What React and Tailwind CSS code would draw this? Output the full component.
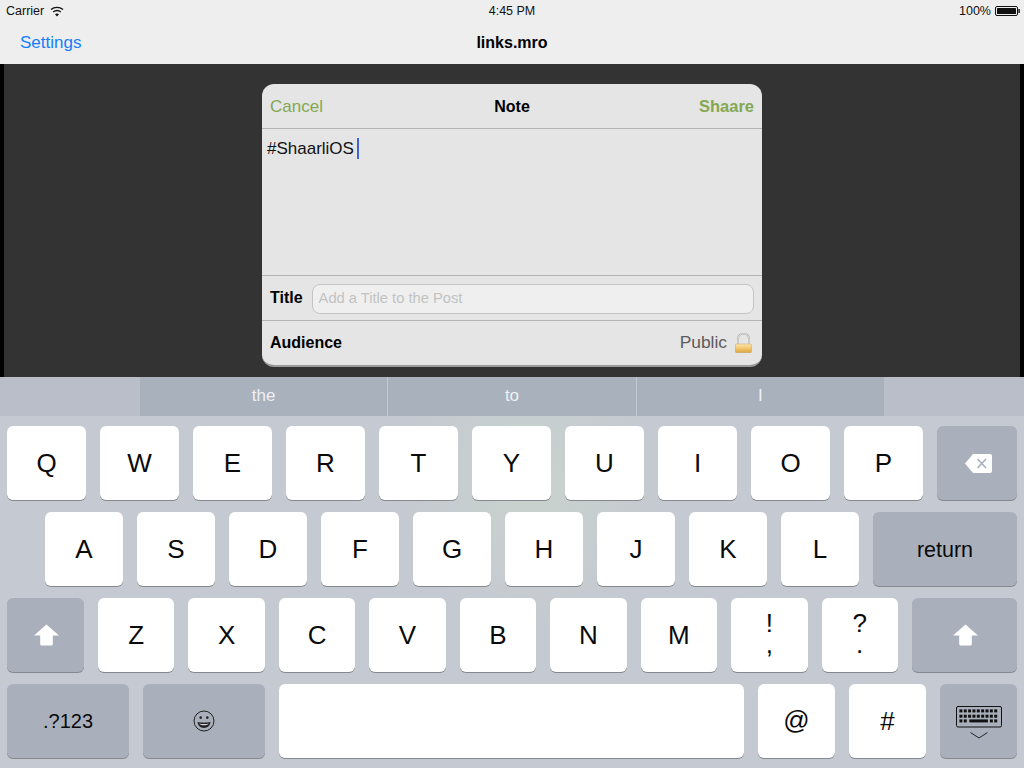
const font = { fontFamily: '"Liberation Sans", Arial, sans-serif' };

function Key({ children, dark, className = "" }) {
  return (
    <div
      className={`h-[74px] rounded-[6px] flex items-center justify-center text-[#0a0a0a] shadow-[0_1px_0_#85888d] ${dark ? "bg-[#a9b0bb]" : "bg-white"} ${className}`}
    >
      {children}
    </div>
  );
}

function Letter({ c }) {
  return (
    <Key className="flex-1 min-w-0 text-[26px] leading-none pb-[1px]">
      <span>{c}</span>
    </Key>
  );
}

function Shift() {
  return (
    <svg width="25" height="22" viewBox="0 0 25 22">
      <path d="M12.5 0.5 L25 11.5 L18.8 11.5 L18.8 20 Q18.8 21.5 17.3 21.5 L7.7 21.5 Q6.2 21.5 6.2 20 L6.2 11.5 L0 11.5 Z" fill="#fff" />
    </svg>
  );
}

function Backspace() {
  return (
    <svg width="27" height="19" viewBox="0 0 27 19">
      <path d="M8 0 H25 Q27 0 27 2 V17 Q27 19 25 19 H8 L0 9.5 Z" fill="#fff" />
      <path d="M12.5 5 L21 14 M21 5 L12.5 14" stroke="#a9b0bb" strokeWidth="1.6" fill="none" />
    </svg>
  );
}

function Emoji() {
  return (
    <svg width="22" height="22" viewBox="0 0 22 22" fill="none">
      <circle cx="11" cy="11" r="10" stroke="#222" strokeWidth="1" />
      <circle cx="7.7" cy="7.6" r="1.3" fill="#222" />
      <circle cx="14.3" cy="7.6" r="1.3" fill="#222" />
      <path d="M4.5 11.8 C8 13 14 13 17.5 11.8 C17.2 15.6 14.6 18 11 18 C7.4 18 4.8 15.6 4.5 11.8 Z" fill="#222" />
      <path d="M6.2 13.4 C9 14.2 13 14.2 15.8 13.4 C15.2 14.6 13.5 15.2 11 15.2 C8.5 15.2 6.8 14.6 6.2 13.4 Z" fill="#d8dbe0" />
    </svg>
  );
}

function KeyboardIcon() {
  const blocks = [];
  [3.4, 8.7, 13.4].forEach((y, r) => {
    for (let i = 0; i < 9; i++) {
      if (r === 2 && i > 1 && i < 7) continue;
      blocks.push(<rect key={`${r}-${i}`} x={3.4 + i * 4.35} y={y} width="3" height="3" fill="#111" />);
    }
  });
  return (
    <svg width="46" height="34" viewBox="0 0 46 34" fill="none">
      <rect x="0.5" y="0.5" width="45" height="20.5" rx="1.5" stroke="#111" fill="none" />
      {blocks}
      <rect x="13.3" y="13.4" width="18.6" height="3" fill="#111" />
      <path d="M14.5 26.5 L23 32 L31.5 26.5" stroke="#222" strokeWidth="1" />
    </svg>
  );
}

function Wifi() {
  return (
    <svg width="14" height="11" viewBox="0 0 14 11" fill="none">
      <path d="M1 3.6 C4.4 0.6 9.6 0.6 13 3.6" stroke="#111" strokeWidth="1.4" />
      <path d="M3.2 6 C5.4 4.2 8.6 4.2 10.8 6" stroke="#111" strokeWidth="1.4" />
      <path d="M5 8.3 L7 10.4 L9 8.3 C7.8 7.3 6.2 7.3 5 8.3 Z" fill="#111" />
    </svg>
  );
}

function Battery() {
  return (
    <svg width="25" height="10" viewBox="0 0 25 10" fill="none">
      <rect x="0.5" y="0.5" width="22" height="9" rx="1.5" stroke="#111" />
      <rect x="2" y="2" width="19" height="6" rx="0.5" fill="#111" />
      <rect x="23.4" y="3" width="1.4" height="4" fill="#111" />
    </svg>
  );
}

function Lock() {
  return (
    <svg width="17" height="20" viewBox="0 0 17 20" fill="none">
      <defs>
        <linearGradient id="lockBody" x1="0" y1="0" x2="0" y2="1">
          <stop offset="0" stopColor="#fbe6ad" />
          <stop offset="0.5" stopColor="#f3c670" />
          <stop offset="1" stopColor="#dca443" />
        </linearGradient>
      </defs>
      <path d="M3 11 V5.5 C3 2.4 5.2 0.9 8.5 0.9 C11.8 0.9 14 2.4 14 5.5 V11" stroke="#a8a8a8" strokeWidth="1.8" />
      <path d="M3 11 V5.5 C3 2.4 5.2 0.9 8.5 0.9 C11.8 0.9 14 2.4 14 5.5 V11" stroke="#f4f4f4" strokeWidth="0.8" />
      <rect x="0.5" y="11" width="16" height="8.7" rx="1" fill="url(#lockBody)" stroke="#cfa35a" strokeWidth="0.5" />
    </svg>
  );
}

export default function App() {
  return (
    <div style={font} className="w-[1024px] h-[768px] overflow-hidden flex flex-col bg-[#333]">
      <header className="h-[64px] bg-[#eeeeee] flex flex-col shrink-0">
        <div className="h-[22px] relative flex items-center justify-between pl-[6px] pr-[4px] text-[12.5px] text-[#111]">
          <div className="flex items-center gap-[6px]">
            <span>Carrier</span>
            <Wifi />
          </div>
          <span className="absolute left-0 right-0 text-center">4:45 PM</span>
          <div className="flex items-center gap-[4px]">
            <span>100%</span>
            <Battery />
          </div>
        </div>
        <div className="flex-1 relative flex items-center pl-[20px]">
          <span className="text-[17px] text-[#157efb]">Settings</span>
          <span className="absolute left-0 right-0 text-center text-[16px] font-bold text-black">links.mro</span>
        </div>
      </header>

      <main className="h-[313px] shrink-0 bg-[#333] border-x-4 border-black flex justify-center pt-[20px]">
        <div className="w-[500px] h-[283px] rounded-[12px] bg-[#e5e5e5] flex flex-col overflow-hidden border-b-2 border-[#9a9a9a]">
          <div className="h-[45px] shrink-0 flex items-center justify-between px-[8px] pt-[1px] border-b border-[#b4b4b4] relative">
            <span className="text-[17px] text-[#84a852]">Cancel</span>
            <span className="absolute left-0 right-0 text-center text-[16px] font-bold text-black">Note</span>
            <span className="text-[16.5px] font-bold text-[#84a852]">Shaare</span>
          </div>
          <div className="h-[147px] shrink-0 border-b border-[#b4b4b4] pl-[5px] pt-[8px] flex items-start">
            <span className="text-[17px] leading-[22px] pt-[1px] text-[#111]">#ShaarliOS</span>
            <span className="ml-[3px] w-[2px] h-[21px] mt-[1px] bg-[#3f62d6]"></span>
          </div>
          <div className="h-[45px] shrink-0 border-b border-[#b4b4b4] flex items-center pl-[8px] pr-[8px] pt-[2px] gap-[9px]">
            <span className="text-[16px] font-bold text-black -mt-[3px]">Title</span>
            <div className="flex-1 h-[30px] rounded-[8px] border border-[#c4c4c4] bg-[#efefef] flex items-center pl-[6px] pb-[2px] text-[14.7px] text-[#c2c2c2]">
              Add a Title to the Post
            </div>
          </div>
          <div className="flex-1 flex items-center justify-between pl-[8px] pr-[10px]">
            <span className="text-[16px] font-bold text-black">Audience</span>
            <div className="flex items-center gap-[8px]">
              <span className="text-[17.4px] text-[#5c5c5c] -mt-[2px]">Public</span>
              <Lock />
            </div>
          </div>
        </div>
      </main>

      <section className="flex-1 flex flex-col bg-[radial-gradient(ellipse_130px_140px_at_530px_110px,#c9d3cd_0%,#c5c9d1_100%)]">
        <div className="h-[39px] shrink-0 flex px-[140px] bg-[#b9bec8]">
          <div className="flex-1 flex items-center justify-center bg-[#a9b1bd] pb-[2px] text-[17px] text-[#eef0f3] border-r border-[#c3c8d0]">the</div>
          <div className="flex-1 flex items-center justify-center bg-[#a9b2bc] pb-[2px] text-[17px] text-[#eef0f3] border-r border-[#c3c8d0]">to</div>
          <div className="flex-1 flex items-center justify-center bg-[#a9b1bd] pb-[2px] text-[17px] text-[#eef0f3]">I</div>
        </div>
        <div className="flex flex-col gap-[12px] pt-[10px] px-[7px]">
          <div className="flex gap-[14px]">
            {["Q", "W", "E", "R", "T", "Y", "U", "I", "O", "P"].map((c) => (
              <Letter key={c} c={c} />
            ))}
            <Key dark className="w-[80px] shrink-0 pl-[3px]">
              <Backspace />
            </Key>
          </div>
          <div className="flex gap-[14px] pl-[38px]">
            {["A", "S", "D", "F", "G", "H", "J", "K", "L"].map((c) => (
              <Letter key={c} c={c} />
            ))}
            <Key dark className="w-[144px] shrink-0 text-[21.5px] pt-[2px]">return</Key>
          </div>
          <div className="flex gap-[14px]">
            <Key dark className="w-[77px] shrink-0 pl-[1px] pb-[1px]">
              <Shift />
            </Key>
            {["Z", "X", "C", "V", "B", "N", "M"].map((c) => (
              <Letter key={c} c={c} />
            ))}
            <Key className="flex-1 min-w-0 text-[26px] leading-[21px] pb-[2px]">
              <span className="whitespace-pre-line text-center">{"!\n,"}</span>
            </Key>
            <Key className="flex-1 min-w-0 text-[26px] leading-[21px] pb-[2px]">
              <span className="whitespace-pre-line text-center">{"?\n."}</span>
            </Key>
            <Key dark className="w-[105px] shrink-0 pl-[2px] pb-[1px]">
              <Shift />
            </Key>
          </div>
          <div className="flex gap-[14px]">
            <Key dark className="w-[122px] shrink-0 text-[20px]">.?123</Key>
            <Key dark className="w-[122px] shrink-0">
              <Emoji />
            </Key>
            <Key className="flex-1 min-w-0"></Key>
            <Key className="w-[77px] shrink-0 text-[26px] pb-[1px]">@</Key>
            <Key className="w-[77px] shrink-0 text-[26px]">#</Key>
            <Key dark className="w-[77px] shrink-0 pt-[3px]">
              <KeyboardIcon />
            </Key>
          </div>
        </div>
      </section>
    </div>
  );
}
